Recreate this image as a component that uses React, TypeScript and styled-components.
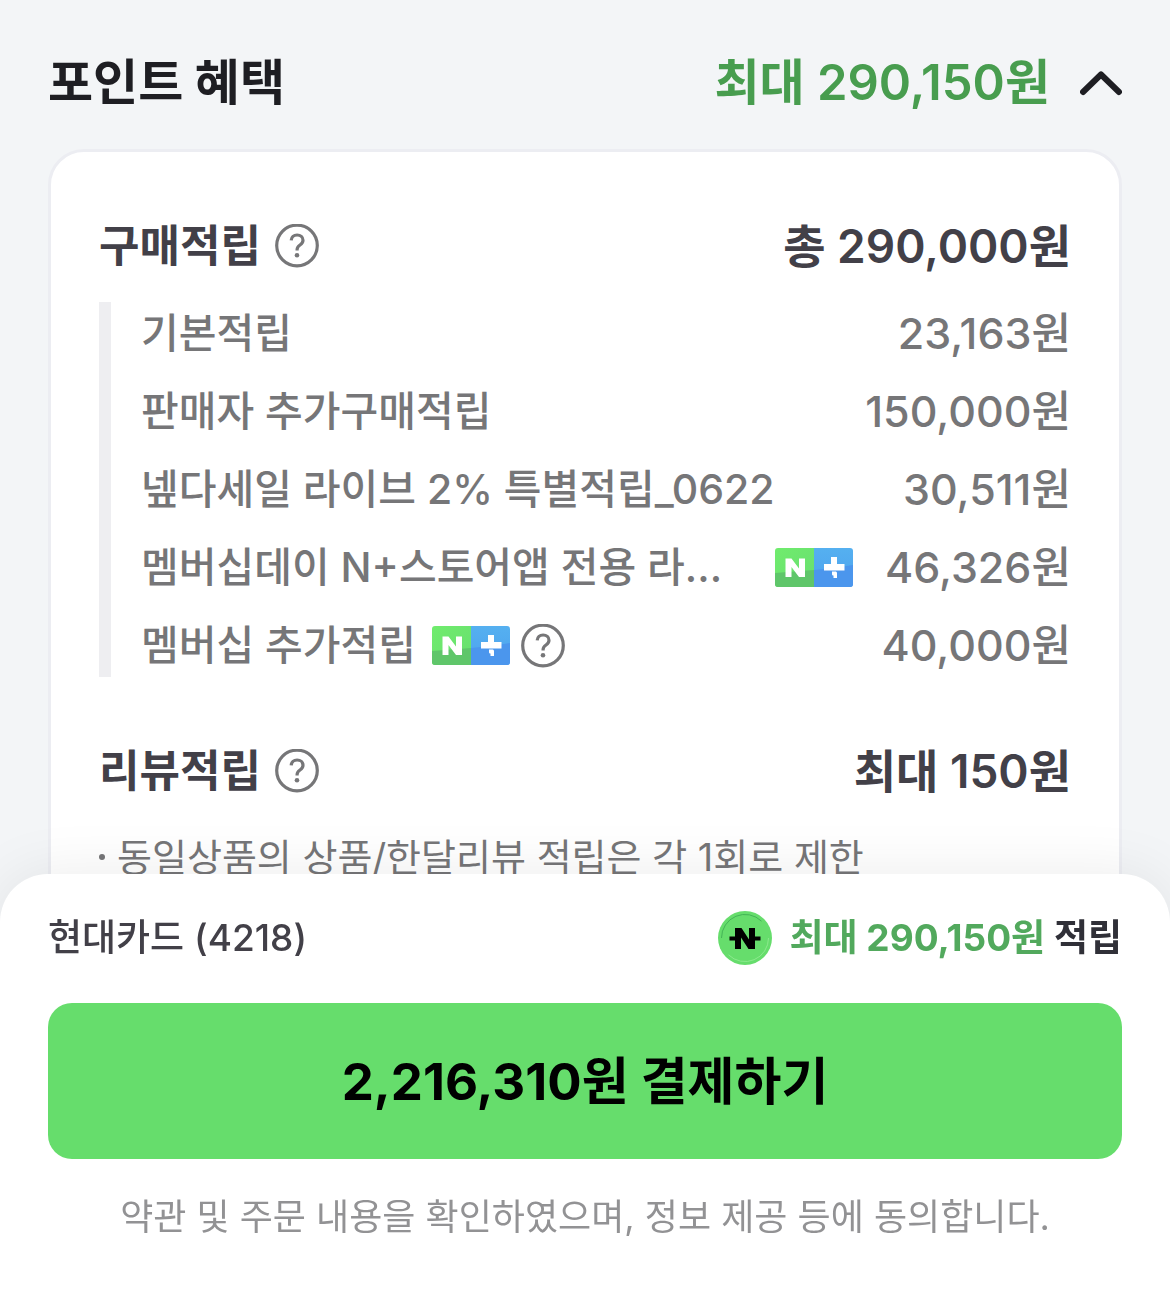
import React, { useId, useState } from 'react';
import styled, { createGlobalStyle } from 'styled-components';

const GlobalStyle = createGlobalStyle`
  *, *::before, *::after { box-sizing: border-box; }
  body {
    margin: 0;
    background: #f3f5f7;
    font-family: Inter, 'Noto Sans CJK KR', sans-serif;
  }
  button {
    margin: 0;
    padding: 0;
    border: 0;
    background: none;
    color: inherit;
    font: inherit;
    cursor: pointer;
  }
`;

const Page = styled.main`
  min-height: 100vh;
  padding: 50px 48px 0;
  overflow: hidden;
`;

const BenefitHeader = styled.header`
  display: flex;
  align-items: center;
  justify-content: space-between;
  height: 66px;
`;

const Title = styled.h1`
  margin: 0;
  color: #1e1e23;
  font-size: 49px;
  font-weight: 700;
  line-height: 66px;
`;

const Toggle = styled.button<{ $open: boolean }>`
  display: flex;
  align-items: center;
  gap: 30px;
  color: #489d4f;
  font-size: 49px;
  font-weight: 600;
  line-height: 66px;

  svg {
    display: block;
    transform: rotate(${({ $open }) => ($open ? 0 : 180)}deg);
  }
`;

const Card = styled.section`
  margin-top: 33px;
  padding: 64px 48px 80px;
  border: 3px solid #ecedf2;
  border-radius: 36px;
  background: #fff;
`;

const Group = styled.section`
  & + & {
    margin-top: 64px;
  }
`;

const GroupHead = styled.div`
  display: flex;
  align-items: center;
  justify-content: space-between;
  height: 60px;
  margin-bottom: 26px;
  color: #424048;
  font-size: 46px;
  font-weight: 600;
  line-height: 60px;
`;

const GroupTitle = styled.div`
  display: flex;
  align-items: center;
  gap: 14px;
`;

const GroupName = styled.h2`
  margin: 0;
  font-size: 44px;
  font-weight: 700;
  line-height: 60px;
`;

const Rows = styled.ul`
  display: grid;
  gap: 15px;
  margin: 0;
  padding: 0 0 0 30px;
  border-left: 12px solid #eeeef1;
  list-style: none;
`;

const Row = styled.li`
  display: flex;
  align-items: center;
  gap: 32px;
  height: 63px;
  color: #767678;
  font-weight: 500;
  line-height: 63px;
`;

const RowLabel = styled.div`
  display: flex;
  flex: 1;
  align-items: center;
  gap: 11px;
  min-width: 0;
  font-size: 41px;
`;

const LabelText = styled.span<{ $fill?: boolean }>`
  flex: ${({ $fill }) => ($fill ? '1 1 0' : '0 1 auto')};
  padding-right: 5px;
  overflow: hidden;
  white-space: nowrap;
`;

const Amount = styled.span`
  font-size: 43px;
  white-space: nowrap;
`;

const Notes = styled.ul`
  margin: 0;
  padding: 0;
  color: #767678;
  font-size: 38px;
  line-height: 60px;
  list-style: none;
`;

const Note = styled.li`
  display: flex;
  align-items: center;
  gap: 12px;

  &::before {
    width: 6px;
    height: 6px;
    border-radius: 50%;
    background: currentColor;
    content: '';
  }
`;

const Help = styled.button`
  display: block;
  flex: none;
  width: 44px;
  height: 44px;

  svg {
    display: block;
  }
`;

const Badge = styled.svg`
  flex: none;
`;

const Sheet = styled.footer`
  position: fixed;
  right: 0;
  bottom: 0;
  left: 0;
  padding: 36px 48px 63px;
  border-radius: 48px 48px 0 0;
  background: #fff;
  box-shadow: 0 0 60px rgba(0, 0, 0, 0.08);
`;

const Summary = styled.div`
  display: flex;
  align-items: center;
  justify-content: space-between;
  height: 56px;
  color: #424048;
  font-size: 37px;
  font-weight: 500;
  line-height: 56px;
`;

const Reward = styled.div`
  display: flex;
  align-items: center;
  gap: 18px;
  color: #303038;
  font-weight: 700;

  svg {
    display: block;
  }
`;

const RewardAmount = styled.strong`
  color: #52a95d;
  font-weight: 700;
`;

const PayButton = styled.button`
  display: block;
  width: 100%;
  height: 156px;
  margin-top: 37px;
  padding-bottom: 6px;
  border-radius: 24px;
  background: #66dd6c;
  color: #000;
  font-size: 51px;
  font-weight: 700;
`;

const Terms = styled.p`
  margin: 32px 0 0;
  color: #929294;
  font-size: 36px;
  line-height: 52px;
  text-align: center;
`;

function HelpButton({ label }: { label: string }) {
  return (
    <Help type="button" aria-label={label}>
      <svg width="44" height="44" viewBox="0 0 44 44" fill="none" aria-hidden="true">
        <circle cx="22" cy="21.5" r="20.3" stroke="#767678" strokeWidth="3.2" />
        <path
          d="M16.2 16.3c.2-3.3 2.6-5.3 5.9-5.3 3.4 0 5.9 2.1 5.9 5.2 0 2.3-1.2 3.6-3 4.8-2 1.3-2.9 2.4-2.9 4.5v.9"
          stroke="#767678"
          strokeWidth="3.2"
        />
        <circle cx="22" cy="31.2" r="2.3" fill="#767678" />
      </svg>
    </Help>
  );
}

function PlusBadge() {
  const id = useId();
  return (
    <Badge width="78" height="39" viewBox="0 0 78 39" role="img" aria-label="네이버플러스">
      <defs>
        <clipPath id={`${id}c`}>
          <rect width="78" height="39" rx="3" />
        </clipPath>
        <linearGradient id={`${id}g`} x1="0" y1="0" x2="1" y2="1">
          <stop offset="0" stopColor="#70ec6d" />
          <stop offset="1" stopColor="#68de70" />
        </linearGradient>
        <linearGradient id={`${id}b`} x1="0" y1="0" x2="0" y2="1">
          <stop offset="0" stopColor="#55b0f0" />
          <stop offset="1" stopColor="#4da2ee" />
        </linearGradient>
      </defs>
      <g clipPath={`url(#${id}c)`}>
        <rect width="39" height="39" fill={`url(#${id}g)`} />
        <rect x="39" width="39" height="39" fill={`url(#${id}b)`} />
        <path d="M0 25C13 24 26 23 39 22V39H0Z" fill="#5fc66a" />
        <path d="M39 22C52 21 65 19 78 17V39H39Z" fill="#4b96ed" />
        <path d="M10.5 10.5h6l7.500 10v-10h6v18.500h-6l-7.500-10v10h-6Z" fill="#fff" />
        <path d="M56 9h6v7h7.500v6.500H49V16h7Z" fill="#fff" />
        <path d="M57 23.500h3c1.500 0 2 .5 2 2V30h-3.500v-2.500c-1 0-1.500-.5-1.500-1.500Z" fill="#fff" />
      </g>
    </Badge>
  );
}

function CoinIcon() {
  return (
    <svg width="54" height="54" viewBox="0 0 54 54" fill="none" aria-hidden="true">
      <circle cx="27" cy="27" r="27" fill="#66dd6c" />
      <path d="M3.5 27a23.5 23.5 0 0 1 40-16.8" stroke="#43b456" strokeWidth="1" />
      <path d="M50.5 27a23.5 23.5 0 0 1-40 16.8" stroke="#8bea8d" strokeWidth="1" />
      <path
        d="M17 17h6.500l7.500 11.500V17h6v8.500h5.500v4H37V38h-6.500L23 26.500V38h-6v-8.500h-5.500v-4H17Z"
        fill="#000"
      />
    </svg>
  );
}

interface Saving {
  label: string;
  amount: string;
  plus?: boolean;
  fill?: boolean;
  help?: boolean;
}

const savings: Saving[] = [
  { label: '기본적립', amount: '23,163원' },
  { label: '판매자 추가구매적립', amount: '150,000원' },
  { label: '넾다세일 라이브 2% 특별적립_0622', amount: '30,511원' },
  { label: '멤버십데이 N+스토어앱 전용 라...', amount: '46,326원', plus: true, fill: true },
  { label: '멤버십 추가적립', amount: '40,000원', plus: true, help: true },
];

export default function App() {
  const [open, setOpen] = useState(true);

  return (
    <>
      <GlobalStyle />
      <Page>
        <BenefitHeader>
          <Title>포인트 혜택</Title>
          <Toggle type="button" $open={open} aria-expanded={open} onClick={() => setOpen(!open)}>
            최대 290,150원
            <svg width="42" height="26" viewBox="0 0 42 26" fill="none" aria-hidden="true">
              <path
                d="M3 22 21 4.5 39 22"
                stroke="#1e1e23"
                strokeWidth="6"
                strokeLinecap="round"
                strokeLinejoin="round"
              />
            </svg>
          </Toggle>
        </BenefitHeader>

        {open && (
          <Card>
            <Group>
              <GroupHead>
                <GroupTitle>
                  <GroupName>구매적립</GroupName>
                  <HelpButton label="구매적립 안내" />
                </GroupTitle>
                <span>총 290,000원</span>
              </GroupHead>
              <Rows>
                {savings.map((item) => (
                  <Row key={item.label}>
                    <RowLabel>
                      <LabelText $fill={item.fill}>{item.label}</LabelText>
                      {item.plus && <PlusBadge />}
                      {item.help && <HelpButton label={`${item.label} 안내`} />}
                    </RowLabel>
                    <Amount>{item.amount}</Amount>
                  </Row>
                ))}
              </Rows>
            </Group>

            <Group>
              <GroupHead>
                <GroupTitle>
                  <GroupName>리뷰적립</GroupName>
                  <HelpButton label="리뷰적립 안내" />
                </GroupTitle>
                <span>최대 150원</span>
              </GroupHead>
              <Notes>
                <Note>동일상품의 상품/한달리뷰 적립은 각 1회로 제한</Note>
              </Notes>
            </Group>
          </Card>
        )}
      </Page>

      <Sheet>
        <Summary>
          <span>현대카드 (4218)</span>
          <Reward>
            <CoinIcon />
            <span>
              <RewardAmount>최대 290,150원</RewardAmount> 적립
            </span>
          </Reward>
        </Summary>
        <PayButton type="button">2,216,310원 결제하기</PayButton>
        <Terms>약관 및 주문 내용을 확인하였으며, 정보 제공 등에 동의합니다.</Terms>
      </Sheet>
    </>
  );
}
